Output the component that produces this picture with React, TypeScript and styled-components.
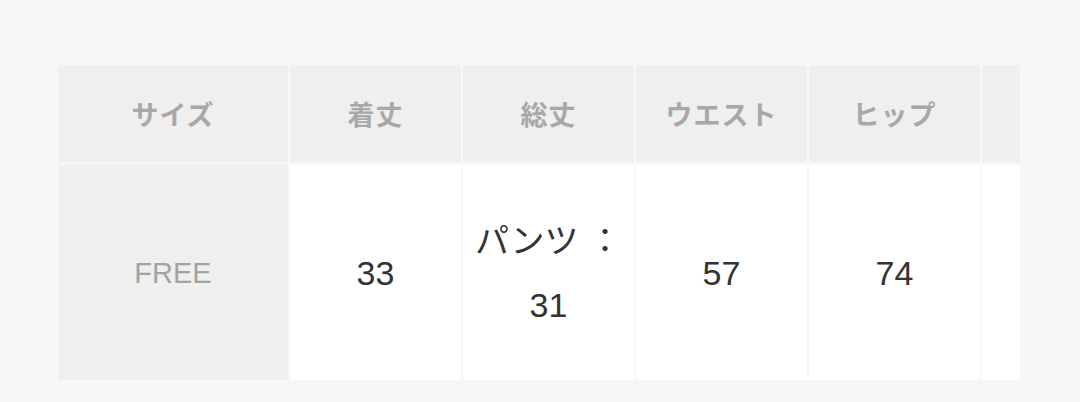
import React from "react";
import styled, { createGlobalStyle } from "styled-components";

const Global = createGlobalStyle`
  html, body {
    margin: 0;
    padding: 0;
    background: #f7f7f7;
  }
  body {
    font-family: "Liberation Sans", "Noto Sans CJK JP", sans-serif;
  }
`;

const Page = styled.div`
  width: 1080px;
  height: 402px;
  box-sizing: border-box;
  padding: 65px 0 0 58px;
  background: #f7f7f7;
`;

const Scroller = styled.div`
  width: 962px;
  overflow: hidden;
`;

const Grid = styled.div`
  display: grid;
  grid-template-columns: 230px repeat(6, 171px);
  grid-template-rows: 97px 215px;
  column-gap: 2px;
  row-gap: 3px;
  width: max-content;
`;

const HeadCell = styled.div`
  display: flex;
  align-items: center;
  justify-content: center;
  background: #efefef;
  color: #a8a8a8;
  font-family: "Noto Sans CJK JP", sans-serif;
  font-weight: 700;
  font-size: 27px;
  letter-spacing: 1px;
`;

const BodyCell = styled.div<{ $label?: boolean }>`
  display: flex;
  align-items: center;
  justify-content: center;
  text-align: center;
  background: ${(p) => (p.$label ? "#efefef" : "#ffffff")};
  color: ${(p) => (p.$label ? "#a3a3a3" : "#333333")};
  font-size: ${(p) => (p.$label ? "29px" : "34px")};
  line-height: 64px;
`;

const headers = ["サイズ", "着丈", "総丈", "ウエスト", "ヒップ", ""];

export default function App() {
  return (
    <Page>
      <Global />
      <Scroller>
        <Grid>
          {headers.map((h, i) => (
            <HeadCell key={i}>{h}</HeadCell>
          ))}
          <HeadCell />
          <BodyCell $label>FREE</BodyCell>
          <BodyCell>33</BodyCell>
          <BodyCell>
            パンツ ：<br />31
          </BodyCell>
          <BodyCell>57</BodyCell>
          <BodyCell>74</BodyCell>
          <BodyCell />
          <BodyCell />
        </Grid>
      </Scroller>
    </Page>
  );
}
